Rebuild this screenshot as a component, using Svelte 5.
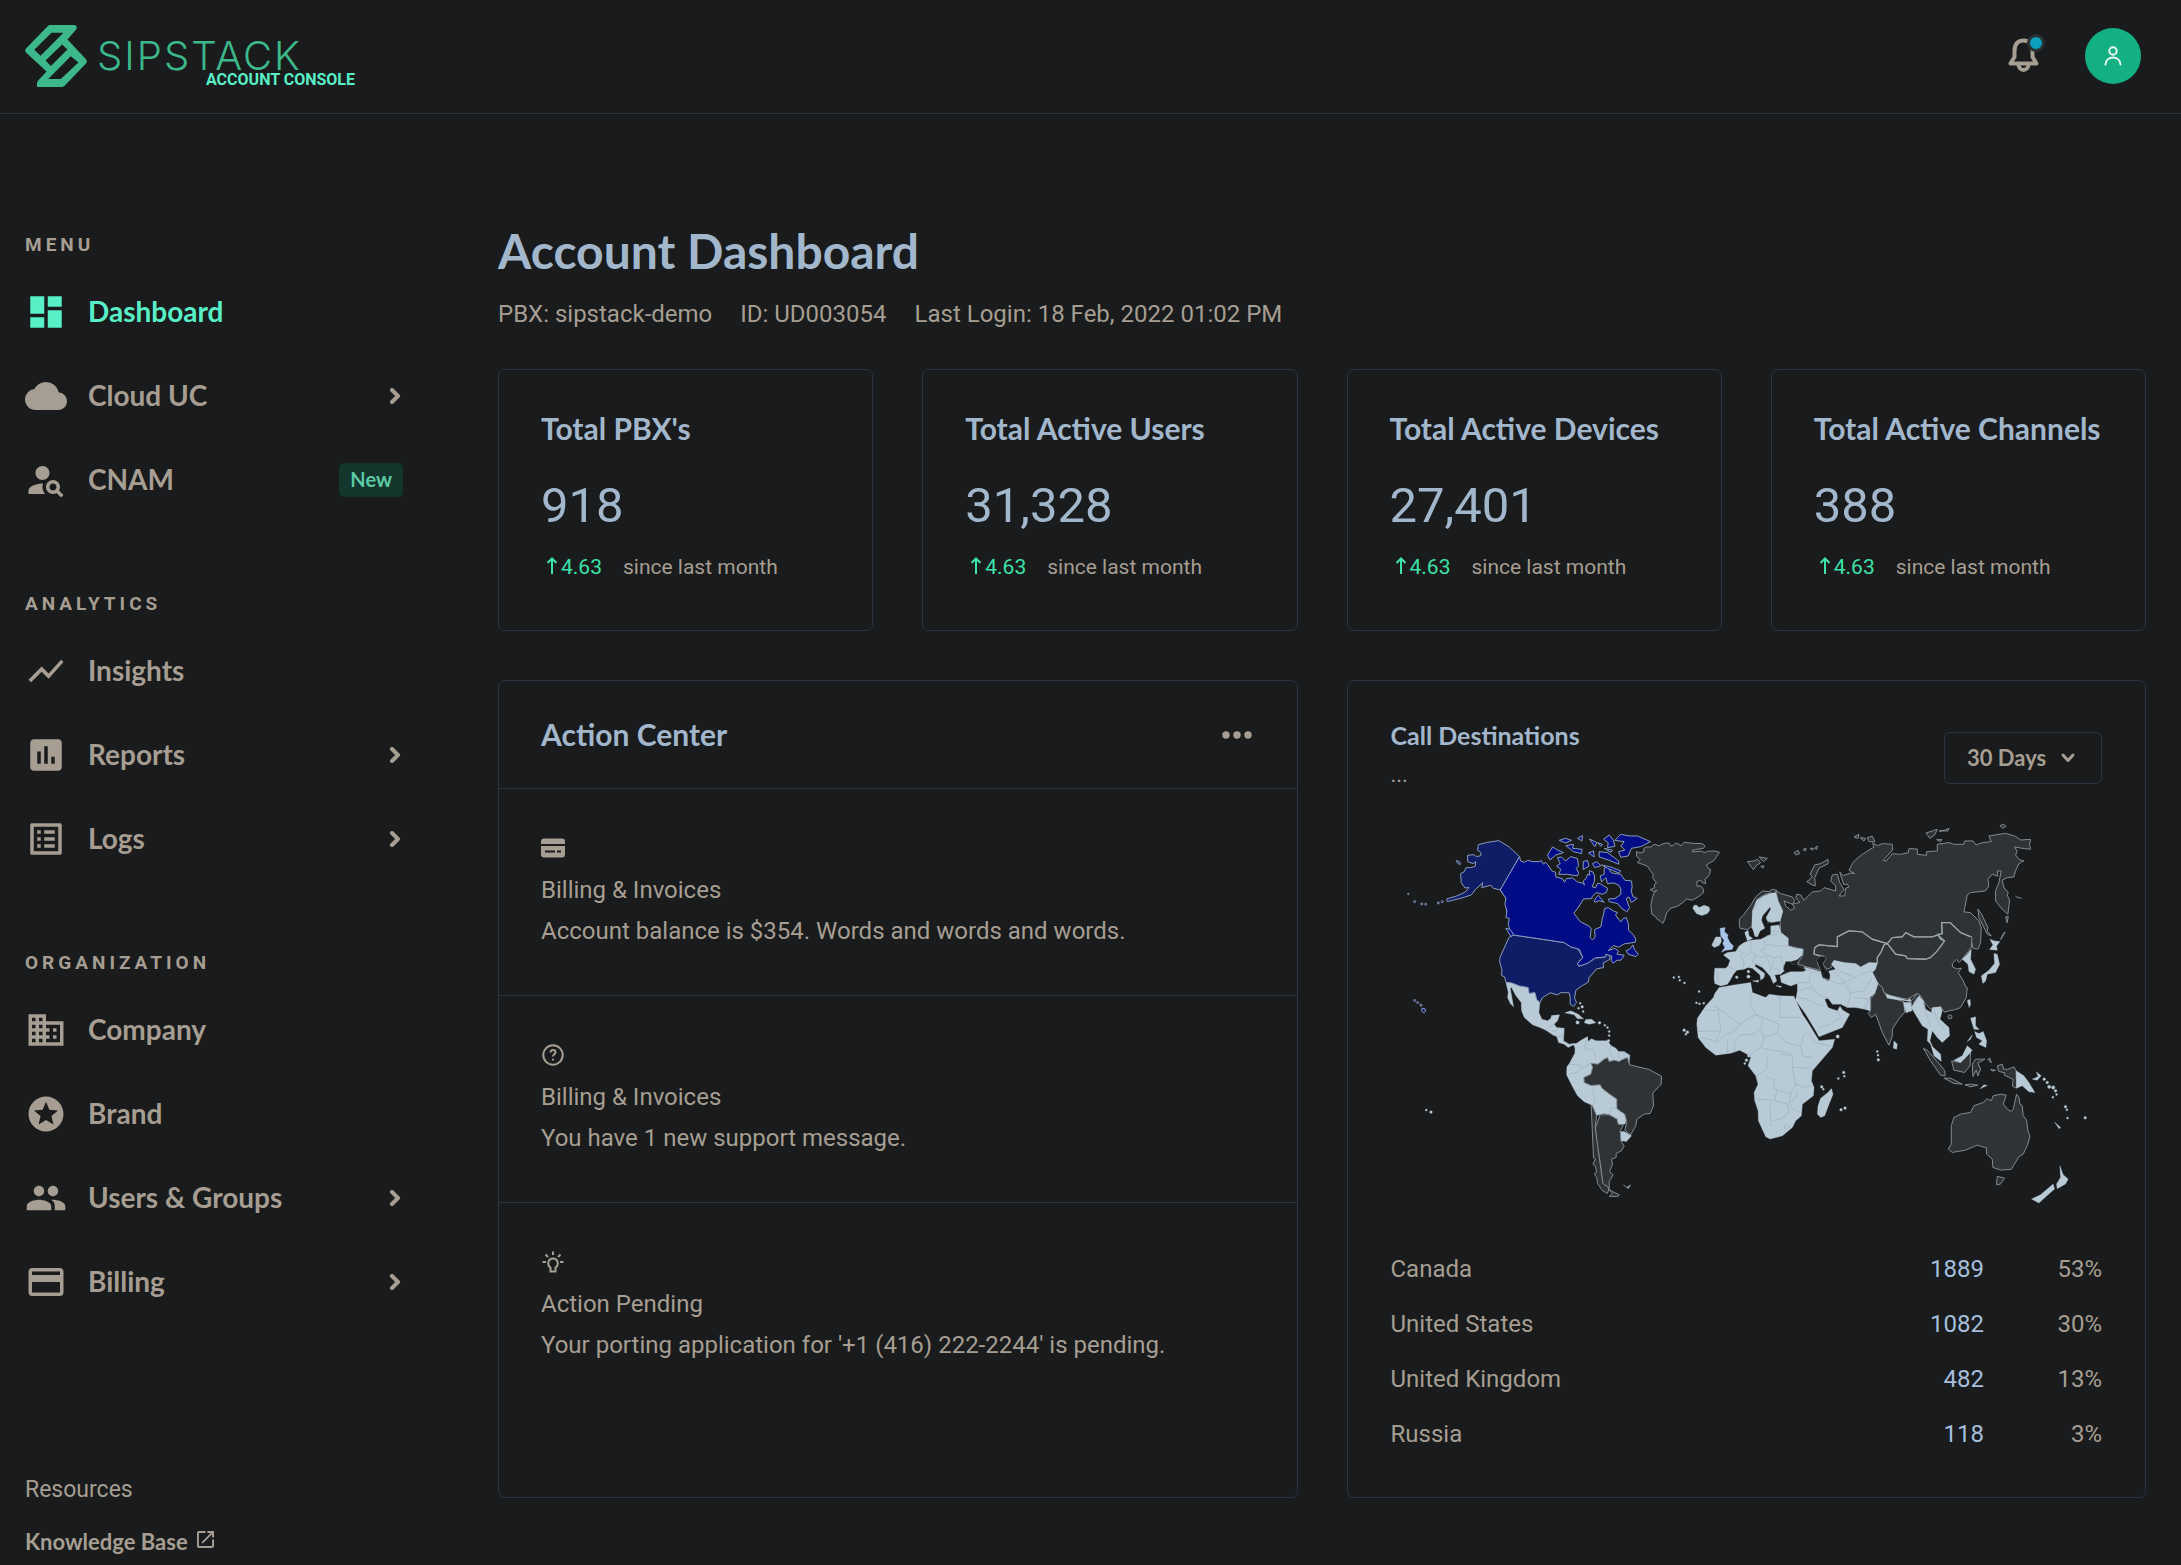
<script>
  const icons = {
    dashboard: 'M3 13h8V3H3v10zm0 8h8v-6H3v6zm10 0h8V11h-8v10zm0-18v6h8V3h-8z',
    cloud: 'M19.35 10.04A7.49 7.49 0 0 0 12 4C9.11 4 6.6 5.64 5.35 8.04A5.994 5.994 0 0 0 0 14c0 3.31 2.69 6 6 6h13c2.76 0 5-2.24 5-5 0-2.64-2.05-4.78-4.65-4.96z',
    personSearch: 'M10 12c2.21 0 4-1.79 4-4s-1.79-4-4-4-4 1.79-4 4 1.79 4 4 4zm.35 2.01C7.62 13.91 2 15.27 2 18v2h9.54c-2.47-2.76-1.23-5.89-1.19-5.99zM19.43 18.02c.36-.59.57-1.28.57-2.02 0-2.21-1.79-4-4-4s-4 1.79-4 4 1.79 4 4 4c.74 0 1.43-.22 2.02-.57L20.59 22 22 20.59l-2.57-2.57zM16 18c-1.1 0-2-.9-2-2s.9-2 2-2 2 .9 2 2-.9 2-2 2z',
    insights: 'M3.5 18.49l6-6.01 4 4L22 6.92l-1.41-1.41-7.09 7.97-4-4L2 16.99z',
    reports: 'M19 3H5c-1.1 0-2 .9-2 2v14c0 1.1.9 2 2 2h14c1.1 0 2-.9 2-2V5c0-1.1-.9-2-2-2zM9 17H7v-7h2v7zm4 0h-2V7h2v10zm4 0h-2v-4h2v4z',
    logs: 'M19 5v14H5V5h14m1.1-2H3.9c-.5 0-.9.4-.9.9v16.2c0 .4.4.9.9.9h16.2c.4 0 .9-.5.9-.9V3.9c0-.5-.5-.9-.9-.9zM11 7h6v2h-6V7zm0 4h6v2h-6v-2zm0 4h6v2h-6v-2zM7 7h2v2H7V7zm0 4h2v2H7v-2zm0 4h2v2H7v-2z',
    company: 'M12 7V3H2v18h20V7H12zM6 19H4v-2h2v2zm0-4H4v-2h2v2zm0-4H4V9h2v2zm0-4H4V5h2v2zm4 12H8v-2h2v2zm0-4H8v-2h2v2zm0-4H8V9h2v2zm0-4H8V5h2v2zm10 12h-8v-2h2v-2h-2v-2h2v-2h-2V9h8v10zm-2-8h-2v2h2v-2zm0 4h-2v2h2v-2z',
    brand: 'M11.99 2C6.47 2 2 6.48 2 12s4.47 10 9.99 10C17.52 22 22 17.52 22 12S17.52 2 11.99 2zm4.24 16L12 15.45 7.77 18l1.12-4.81-3.73-3.23 4.92-.42L12 5l1.92 4.53 4.92.42-3.73 3.23L16.23 18z',
    people: 'M16 11c1.66 0 2.99-1.34 2.99-3S17.66 5 16 5s-3 1.34-3 3 1.34 3 3 3zm-8 0c1.66 0 2.99-1.34 2.99-3S9.66 5 8 5 5 6.34 5 8s1.34 3 3 3zm0 2c-2.33 0-7 1.17-7 3.5V19h14v-2.5c0-2.33-4.67-3.5-7-3.5zm8 0c-.29 0-.62.02-.97.05 1.16.84 1.97 1.97 1.97 3.45V19h6v-2.5c0-2.33-4.67-3.5-7-3.5z',
    billing: 'M20 4H4c-1.11 0-1.99.89-1.99 2L2 18c0 1.11.89 2 2 2h16c1.11 0 2-.89 2-2V6c0-1.11-.89-2-2-2zm0 14H4v-6h16v6zm0-10H4V6h16v2z'
  };

  const sections = [
    { title: 'MENU', items: [
      { label: 'Dashboard', icon: 'dashboard', active: true },
      { label: 'Cloud UC', icon: 'cloud', more: true },
      { label: 'CNAM', icon: 'personSearch', badge: 'New' }
    ] },
    { title: 'ANALYTICS', items: [
      { label: 'Insights', icon: 'insights' },
      { label: 'Reports', icon: 'reports', more: true },
      { label: 'Logs', icon: 'logs', more: true }
    ] },
    { title: 'ORGANIZATION', items: [
      { label: 'Company', icon: 'company' },
      { label: 'Brand', icon: 'brand' },
      { label: 'Users & Groups', icon: 'people', more: true },
      { label: 'Billing', icon: 'billing', more: true }
    ] }
  ];

  const stats = [
    { title: "Total PBX's", value: '918' },
    { title: 'Total Active Users', value: '31,328' },
    { title: 'Total Active Devices', value: '27,401' },
    { title: 'Total Active Channels', value: '388' }
  ];

  const actions = [
    { icon: 'card', title: 'Billing & Invoices', text: 'Account balance is $354. Words and words and words.' },
    { icon: 'help', title: 'Billing & Invoices', text: 'You have 1 new support message.' },
    { icon: 'bulb', title: 'Action Pending', text: "Your porting application for '+1 (416) 222-2244' is pending." }
  ];

  const destinations = [
    ['Canada', '1889', '53%'],
    ['United States', '1082', '30%'],
    ['United Kingdom', '482', '13%'],
    ['Russia', '118', '3%']
  ];

  // Small islands: x, y, radius
  const westDots = [[52,249,2],[71,272,3],[92,279,3],[104,280,3],[142,276,3],[154,272,3],[71,569,3],[80,575,3],[90,583,3]];
  const lightDots = [[106,898,3],[120,904,4],[849,500,3],[864,498,3],[867,508,3],[881,516,3],[925,542,3],[917,576,3],[926,579,3],[939,577,3],[880,658,4],[890,664,4],[885,670,3],[568,577,3],[574,588,4],[563,592,3],[577,602,3],[560,635,5],[626,636,4],[642,643,3],[650,650,3],[655,662,3],[655,674,3],[653,690,4],[1074,735,4],[1067,748,4],[1062,758,3],[1038,499,4],[1073,482,4],[1073,497,5]];
  const eastDots = [[410,722,3],[412,733,3],[413,747,4],[309,785,4],[311,796,3],[293,803,3],[243,828,4],[248,835,3],[301,897,4],[313,892,4],[911,805,4],[920,815,4],[926,828,5],[938,830,5],[945,840,4],[948,851,3],[937,859,3],[975,888,4],[979,897,3],[981,922,3],[1034,921,4],[291,677,5]];

  let period = $state('30 Days');
</script>

<svelte:head><title>Account Dashboard</title></svelte:head>

<header>
  <a class="brand" href="#home" aria-label="Sipstack account console">
    <svg class="mark" viewBox="75 75 187 187" aria-hidden="true">
      <path fill-rule="evenodd" d="M150 75H222Q235 77 230 88L203 119L259 178Q264 185 259 191L196 257Q192 262 186 262H112Q109 250 114 243L140 215L78 158Q73 152 78 146L144 78Q147 75 150 75ZM155 98L103 150L122 168L191 98ZM187 134L137 182L153 199L203 149ZM213 169L145 238H183L236 188Z" />
    </svg>
    <span class="words"><span class="name">SIPSTACK</span><span class="console">ACCOUNT CONSOLE</span></span>
  </a>
  <div class="tools">
    <button class="bell" aria-label="Notifications">
      <svg viewBox="0 0 34 36" aria-hidden="true">
        <path d="M3.5 25.5H29.5L25.5 19V13C25.5 6 22 2.5 16.5 2.5S7.5 6 7.5 13V19Z M11.5 26C11.5 34 21.5 34 21.5 26" />
      </svg>
      <i></i>
    </button>
    <button class="avatar" aria-label="Account">
      <svg viewBox="0 0 18 20" aria-hidden="true"><circle cx="9" cy="5" r="3.7" /><path d="M1.5 18.5C2 9 16 9 16.5 18.5" /></svg>
    </button>
  </div>
</header>

<div class="layout">
  <aside>
    <nav>
      {#each sections as s}
        <section>
          <h2>{s.title}</h2>
          {#each s.items as item}
            <a class="item" class:active={item.active} href={'#' + item.icon}>
              <svg class="icon" viewBox="0 0 24 24" aria-hidden="true"><path d={icons[item.icon]} /></svg>
              <span>{item.label}</span>
              {#if item.more}
                <svg class="chev" viewBox="0 0 12 16" aria-hidden="true"><path d="M3 2L9 8L3 14" /></svg>
              {/if}
              {#if item.badge}<b>{item.badge}</b>{/if}
            </a>
          {/each}
        </section>
      {/each}
    </nav>
    <div class="resources">
      <p>Resources</p>
      <a href="#kb">Knowledge Base
        <svg viewBox="3 3 18 18" aria-hidden="true"><path d="M19 19H5V5h7V3H5a2 2 0 0 0-2 2v14a2 2 0 0 0 2 2h14c1.1 0 2-.9 2-2v-7h-2v7zM14 3v2h3.59l-9.83 9.83 1.41 1.41L19 6.41V10h2V3h-7z" /></svg>
      </a>
    </div>
  </aside>

  <main>
    <h1>Account Dashboard</h1>
    <p class="meta"><span>PBX: sipstack-demo</span><span>ID: UD003054</span><span>Last Login: 18 Feb, 2022 01:02 PM</span></p>

    <div class="grid">
      {#each stats as s}
        <article class="card stat">
          <h3>{s.title}</h3>
          <p class="value">{s.value}</p>
          <p class="trend">
            <svg viewBox="0 0 12 18" aria-hidden="true"><path d="M6 17V2M1.500 6L6 1.500L10.500 6" /></svg>
            <strong>4.63</strong><span>since last month</span>
          </p>
        </article>
      {/each}

      <section class="card wide">
        <div class="head">
          <h3>Action Center</h3>
          <button aria-label="More options"><svg viewBox="0 0 30 8" aria-hidden="true"><circle cx="4" cy="4" r="3.7" /><circle cx="15" cy="4" r="3.7" /><circle cx="26" cy="4" r="3.7" /></svg></button>
        </div>
        {#each actions as a}
          <div class="action">
            <div class="glyph">
              {#if a.icon === 'card'}
                <svg viewBox="0 0 24 24" aria-hidden="true"><path fill-rule="evenodd" d="M3 2.5H21Q24 2.5 24 5.5V8H0V5.5Q0 2.5 3 2.5ZM0 10H24V18.5Q24 21.5 21 21.5H3Q0 21.5 0 18.5ZM4 14.5V16.5H14V14.5ZM16 14.5V16.5H20V14.5Z" /></svg>
              {:else if a.icon === 'help'}
                <svg class="line" viewBox="0 0 24 24" aria-hidden="true"><circle cx="12" cy="12" r="9.7" /><path d="M9.5 9.5C9.5 6 14.5 6.3 14.5 9.3C14.5 11.5 12 11.2 12 13.6M12 15.8V17.4" /></svg>
              {:else}
                <svg class="line" viewBox="0 0 24 24" aria-hidden="true"><path d="M9.5 21.5V17.5C6 15.5 6.5 8.5 12 8.5S18 15.5 14.5 17.5V21.5ZM12 1.5V5M1.5 12H5M19 12H22.5M4.5 4.5L7 7M19.5 4.5L17 7" /></svg>
              {/if}
            </div>
            <p>{a.title}</p>
            <p>{a.text}</p>
          </div>
        {/each}
      </section>

      <section class="card wide calls">
        <div class="callhead">
          <div><h4>Call Destinations</h4><p>...</p></div>
          <label class="period">
            <select aria-label="Period" bind:value={period}>
              <option>30 Days</option><option>60 Days</option><option>90 Days</option>
            </select>
            <svg viewBox="0 0 14 10" aria-hidden="true"><path d="M2 2L7 7.5L12 2" /></svg>
          </label>
        </div>

        <svg class="map" viewBox="0 0 2136 1200" role="img" aria-label="Call destinations by country">
          <g class="grey">
            <path d="M737 122L747 126L760 122L758 114L766 108L780 108L790 100L805 104L820 97L835 96L840 105L848 102L855 96L872 104L880 94L905 97L935 98L943 105L938 112L918 115L905 118L905 123L930 120L942 125L950 121L972 120L986 124L978 136L970 148L947 162L952 172L959 175L957 188L950 200L942 205L945 218L935 216L930 208L918 212L919 226L930 225L938 235L938 245L925 256L905 268L888 264L876 275L860 286L840 292L828 305L822 325L816 338L806 328L800 326L793 316L783 310L780 285L784 262L790 245L799 238L788 242L778 236L792 230L790 222L797 216L785 200L788 192L778 178L770 166L755 160L740 155L748 145L737 136Z" />
          </g>
          <g class="light">
            <path d="M345 514L360 512L385 525L412 530L415 548L432 545L437 565L447 575L444 605L453 625L470 630L480 622L482 614L506 612L500 630L490 640L497 650L520 652L518 690L535 700L552 697L560 702L553 712L548 702L532 710L520 700L503 695L498 678L485 672L465 658L447 650L425 642L400 620L392 600L391 575L374 553L362 530L358 532L368 588L358 578L350 560L352 545Z" />
            <path d="M522 606L540 600L562 610L578 624L560 624L550 612Z M580 636L585 626L602 625L615 636L595 640Z" />
            <path d="M553 700L568 690L590 677L592 692L602 684L615 690L650 690L660 704L675 712L683 722L700 722L717 733L715 760L690 820L700 910L706 925L703 940L680 940L680 925L655 912L640 908L625 912L617 914L605 884L580 873L560 855L545 828L527 792L528 768L536 757L545 740L552 727Z M688 962L700 962L722 975L707 992L690 990Z" />
            <path d="M906 292L910 283L918 283L925 290L940 283L955 288L957 298L950 308L933 314L917 308Z M963 402L975 378L990 378L992 392L985 404L970 410Z M698 1122L708 1130L720 1122L712 1133Z" />
            {#each lightDots as d}<circle cx={d[0]} cy={d[1]} r={d[2]} />{/each}
          </g>
          <g class="grey">
            <path d="M601 757L605 770L600 790L579 800L580 815L600 824L628 822L633 832L656 850L678 865L678 893L690 903L702 910L708 935L702 958L720 972L735 945L738 926L760 910L778 908L788 885L786 847L811 820L812 796L775 776L716 762L710 740L690 748L685 752L670 748L655 752L650 740L640 745L621 760Z" />
            <path d="M628 912L655 912L678 925L682 940L698 942L688 960L690 990L700 1006L692 1020L676 1028L676 1040L662 1045L665 1060L656 1083L667 1092L655 1112L655 1131L636 1120L630 1070L617 990L614 950Z" />
            <path d="M601 884L606 888L617 915L613 950L621 1010L628 1060L636 1118L655 1132L650 1148L635 1140L620 1118L618 1100L610 1090L617 1085L614 1066L606 1060L614 1045L608 1042Z M652 1134L668 1144L685 1152L682 1157L655 1157L665 1148Z" />
          </g>
          <g class="us">
            <path d="M386 137L355 108L324 89L290 94L262 101L260 118L270 125L270 134L257 137L247 131L230 133L230 152L247 158L254 152L253 166L240 170L225 170L220 182L209 188L211 215L222 231L234 230L222 244L195 256L167 264L169 272L210 262L241 252L254 235L276 215L272 230L300 223L307 232L328 237L349 256L357 285L355 302L347 303L345 262L328 237Z" />
            <path d="M366 372L520 395L540 408L560 413L576 439L570 445L560 458L564 466L590 457L614 441L640 440L645 432L655 430L658 445L637 456L638 470L617 474L595 500L592 514L575 524L555 538L551 562L557 575L548 587L538 580L538 560L535 546L510 545L500 552L478 546L455 560L447 575L437 565L432 545L415 548L412 530L385 525L362 516L345 514L341 498L332 494L333 476L326 452L327 440L354 380Z M93 592L102 594L104 601L97 606L92 600Z M196 148L208 154L207 161L200 157Z" />
            {#each westDots as d}<circle cx={d[0]} cy={d[1]} r={d[2]} />{/each}
          </g>
          <g class="canada">
            <path d="M386 137L389 150L400 154L411 148L424 152L444 152L452 149L458 160L463 154L470 160L483 180L494 184L495 198L515 203L521 214L527 203L545 201L560 213L574 216L581 222L577 210L586 202L590 190L597 193L595 179L606 183L611 195L611 210L604 228L614 230L620 217L628 218L640 226L650 232L647 244L634 250L616 245L604 257L603 263L578 264L562 290L549 307L568 332L595 346L601 352L598 380L605 387L613 378L611 356L630 348L634 325L638 310L641 293L652 290L668 300L680 305L674 312L690 333L697 323L706 320L713 340L713 358L727 371L735 385L733 394L700 399L683 409L668 404L652 419L672 412L683 421L678 430L700 433L690 448L678 448L667 457L661 449L663 436L645 430L645 438L614 441L590 457L564 466L560 458L576 439L565 415L540 408L520 395L366 372L356 355L352 340L355 322L345 320L348 300L342 280L345 262L328 237L355 190Z" />
            <path d="M706 419L718 414L726 402L731 416L742 430L735 437L712 430Z M628 195L640 190L640 172L650 168L662 186L690 190L702 208L722 210L724 228L721 240L727 258L739 262L722 275L714 258L706 263L716 290L708 303L690 290L681 278L655 272L653 264L672 263L690 250L690 234L683 222L668 216L650 218L645 200L632 213Z M610 268L622 253L640 274L625 269L612 274Z M345 352L358 356L368 370L360 377Z" />
            <path d="M500 140L512 138L523 150L540 137L560 143L563 165L556 172L563 185L560 195L530 190L503 190L510 175L497 165L508 158Z M470 132L485 108L498 116L518 125L495 132L477 147Z M505 88L524 82L542 88L525 96Z M525 104L548 100L545 112L574 115L572 128L548 122Z M560 82L575 74L573 90Z M596 84L618 95L612 107Z M638 85L655 72L668 88L672 106L650 110L652 95Z M672 88L690 70L715 75L740 75L779 92L750 107L722 112L712 135L690 139L683 122L702 117L690 105L700 92Z M625 122L650 125L683 150L684 160L655 148L625 138Z M593 126L608 120L610 138Z M577 152L590 148L594 165L577 176Z M605 158L618 152L630 164L612 170Z M632 162L660 168L690 180L684 186L650 172Z M620 95L635 100L630 106Z M640 112L665 118L660 124Z" />
          </g>
          <path class="uk" d="M988 352L1003 350L1001 362L1012 372L1010 380L1018 395L1028 405L1024 416L1005 418L992 424L1002 410L996 398L1000 388L990 375Z" />
          <g transform="translate(1050 0)">
            <g class="grey">
              <path d="M-4 325L10 310L32 280L45 258L65 240L85 242L95 235L108 238L110 250L90 246L70 252L50 265L38 295L35 345L20 356L-2 352L-4 340Z" />
              <path d="M105 240L120 248L155 258L162 270L155 280L130 270L135 285L150 298L162 292L155 280L178 274L165 262L168 250L180 252L190 268L215 243L240 240L250 230L285 240L285 225L270 210L275 192L290 190L297 215L310 235L295 255L312 255L315 232L325 228L320 220L309 220L297 183L308 194L330 186L342 188L325 178L335 158L345 146L365 130L400 108L396 96L410 104L425 98L455 100L455 118L428 148L437 150L455 128L480 130L503 125L505 113L530 114L530 130L558 133L558 122L590 120L590 100L625 95L640 100L670 100L672 90L698 90L706 102L725 95L752 92L745 75L795 67L825 76L840 87L870 85L867 100L870 115L845 112L822 108L830 120L825 132L836 146L850 150L835 158L825 180L820 198L800 200L785 208L790 230L803 245L800 252L807 268L802 310L785 295L765 270L765 240L775 215L782 180L770 180L772 196L755 190L742 205L745 225L735 240L690 245L680 252L670 303L690 305L715 330L722 350L720 395L712 415L697 412L690 378L660 365L628 335L603 335L605 368L590 370L575 380L520 378L495 365L485 378L455 380L440 398L395 385L365 363L325 360L290 378L290 407L235 402L222 410L220 430L250 436L255 445L240 445L230 455L240 478L205 470L172 460L175 450L187 432L187 415L142 405L142 382L120 365L118 330L126 300L112 270Z" />
              <path d="M220 430L222 410L235 402L290 407L290 378L325 360L365 363L395 385L440 398L430 402L422 422L410 440L410 458L385 457L360 470L345 462L310 458L280 450L272 470L258 475L246 460L255 445L250 436Z" />
              <path d="M440 398L455 380L485 378L495 365L520 378L575 378L592 372L612 390L590 420L570 440L555 445L500 443L495 435L465 430Z" />
              <path d="M440 398L430 402L422 422L410 440L410 456L395 484L412 518L425 530L430 545L450 555L500 565L530 548L540 555L555 580L570 595L600 588L612 604L625 600L645 596L660 590L677 560L680 530L675 528L668 510L653 485L662 472L648 474L636 468L635 458L648 445L655 455L665 445L692 410L694 378L660 365L628 335L603 335L605 368L592 372L600 385L612 390L590 420L570 440L555 445L500 443L495 435L465 430Z" />
              <path d="M412 518L425 530L430 545L440 557L490 573L492 605L476 622L455 655L455 675L445 703L425 665L405 610L392 620L383 608L390 598L390 565L402 548Z M510 572L530 548L540 555L525 565L515 590Z" />
              <path d="M262 145L240 158L222 162L208 190L215 196L208 205L198 212L215 222L224 225L222 200L235 172L262 158Z M20 152L40 150L50 145L60 155L48 162L38 176Z M55 138L80 142L68 152Z M60 166L70 165L66 172Z M160 125L172 118L177 128L165 132Z M188 114L196 112L196 118L190 119Z M208 112L218 112L216 118Z M222 112L230 105L228 115Z M340 78L355 70L352 82Z M358 80L375 82L370 90Z M380 80L395 76L403 92L385 92Z M556 66L575 60L590 55L582 72L568 82Z M595 60L612 58L625 52L622 60Z M588 86L604 86L600 92Z M778 44L790 40L796 46L786 52Z M712 295L722 308L735 335L742 350L740 360L752 375L740 370L728 345L715 320Z M795 318L803 316L800 336Z M788 368L794 364L780 386Z M825 256L833 260L843 262" />
              <path d="M548 712L562 720L588 750L613 780L613 795L600 793L570 750Z M610 802L630 802L665 820L640 818Z M633 750L660 755L690 725L688 765L672 785L640 778Z M695 760L705 745L733 745L712 757L720 775L712 795L707 778L697 797Z M770 765L785 760L789 775L800 776L820 768L827 780L828 832L815 826L818 806L790 792L793 786L775 782Z M742 745L748 742L752 756Z M750 776L765 778L756 781Z M673 822L690 820L712 823L690 828Z" />
              <path d="M632 945L640 920L660 910L690 905L700 885L730 874L738 864L752 870L758 855L780 850L797 853L788 880L800 895L812 902L818 895L828 850L835 860L838 880L845 885L848 915L858 928L862 960L868 975L862 1000L848 1030L835 1038L824 1056L812 1076L780 1078L757 1070L755 1045L738 1030L738 1012L710 1003L675 1018L635 1025L623 1015L632 1000Z M770 1097L792 1102L780 1120L768 1122Z" />
              <circle cx="628" cy="618" r="6" />
            </g>
            <g class="light">
              <path d="M35 300L48 268L68 255L88 248L105 245L112 270L126 300L118 330L92 335L80 330L76 320L90 295L88 288L65 315L62 328L72 352L58 360L50 378L42 376L38 360L33 350Z M12 365L22 358L25 375L36 382L20 390Z" />
              <path d="M10 395L30 388L60 385L90 370L90 345L115 342L120 365L142 382L142 405L165 412L187 415L185 432L170 446L150 452L138 455L128 465L130 480L120 490L102 492L108 510L98 518L88 495L65 470L45 460L42 466L72 488L70 500L60 508L58 492L35 472L22 470L10 475L-12 478L-22 490L-30 505L-40 520L-60 525L-78 518L-80 500L-78 472L-45 472L-38 465L-32 448L-52 432L-40 425L-15 422L-5 405Z" />
              <path d="M118 495L150 482L195 480L190 468L240 482L245 500L262 510L268 500L265 480L285 475L272 460L280 448L310 455L345 458L360 468L385 455L410 456L405 475L395 484L412 518L402 548L388 560L388 600L372 595L345 590L320 590L300 580L275 580L262 562L252 565L262 590L275 595L290 600L298 586L306 598L327 610L305 650L235 678L225 660L195 610L165 568L170 540L170 518L150 525L122 515Z" />
              <path d="M-65 530L-20 522L30 515L35 545L75 560L85 550L120 555L160 556L165 568L185 610L205 640L235 690L282 685L275 710L215 780L212 810L220 830L218 855L185 880L182 915L165 930L155 950L125 975L88 985L75 978L53 930L52 900L42 870L40 845L52 820L45 795L22 765L30 740L22 732L-3 718L-30 727L-75 733L-105 710L-128 680L-132 640L-130 622L-105 585L-82 560L-78 548Z" />
              <path d="M232 885L240 862L262 845L272 833L277 850L265 880L252 915L240 920L230 910Z M435 550L500 568L510 563L510 572L440 562Z M488 575L510 574L514 600L496 606Z M512 590L535 555L548 570L555 595L572 605L575 590L600 588L605 600L598 625L625 650L627 675L605 695L590 680L575 660L568 690L576 708L600 730L602 752L580 735L570 700L560 690L562 655L545 645L530 620Z M460 690L470 700L468 715L458 712Z" />
              <path d="M640 748L665 735L680 705L695 718L680 735L660 755Z M690 622L705 618L705 645L716 656L700 655Z M702 662L715 668L728 662L738 690L736 710L715 700L725 690L708 680Z M680 692L695 672L690 685Z M827 780L850 795L865 815L883 845L865 843L845 825L828 832Z M875 805L893 797L887 783L902 795L890 808Z M718 834L730 822L740 824Z" />
              <path d="M748 385L762 390L778 392L768 405L770 418L747 416L757 402Z M760 428L770 430L777 460L765 485L740 490L735 510L727 518L722 495L745 478L762 458Z M665 445L680 430L692 415L690 445L705 475L700 490L685 482L682 460Z M680 570L688 565L690 580L686 590Z" />
              <path d="M958 1065L968 1092L983 1105L975 1120L950 1134L948 1120L960 1100Z M938 1120L942 1135L925 1150L895 1177L873 1165L900 1152Z M942 934L960 950L956 954Z M35 510L55 508L52 514Z M105 524L122 526L120 530Z" />
              {#each eastDots as d}<circle cx={d[0]} cy={d[1]} r={d[2]} />{/each}
            </g>
            <path class="sea" d="M128 474L135 452L150 452L156 462L172 452L168 462L195 476L188 482L150 482L134 486Z M228 448L240 436L255 438L255 446L246 458L252 472L268 490L266 508L247 502L243 486Z" />
            <path class="strong" d="M440 398L455 380L485 378L495 365L520 378L575 378L592 372L612 390L590 420L570 440L555 445L500 443L495 435L465 430ZM612 390L600 385L592 372L605 368L603 335L628 335L660 365L690 378M410 456L410 440L422 422L430 402L440 398L395 385L365 363L325 360L290 378L290 407L235 402L222 410L220 430L240 436" />
            <path class="inner" d="M-78 585L-2 640L45 610L115 640M30 545L30 580L45 610M118 555V620H182M-105 598L-68 598L-60 660L-130 662M-78 585L-60 598M-2 640L-20 662L-45 670L-78 700M-60 660L-75 690L-120 680M45 610L65 625L60 655L40 670L0 672L-18 690V725M-40 690V727M60 655L70 680L110 665L115 640M70 680L60 710L25 735M60 710L80 715L110 720L150 728L160 740M110 665L130 690L150 700L180 705L190 670L200 665L225 695L270 705M180 705L185 735L215 740M155 735L155 770L165 820L190 830L215 825M80 735L78 775L45 798M78 800L100 805L100 835L150 850L165 820M40 865L102 868L110 835M88 870L90 945M100 870L140 880L145 905L120 925L95 930M140 880L165 860L170 835M150 850L145 880L165 900L180 905M130 945Q140 935 145 945T132 952ZM155 770L212 772M120 730L155 735" />
            <path class="inner" d="M170 515L205 515L210 485M175 540L205 530L240 555L262 562M172 560L200 565L225 580L250 585M235 650L270 640L300 620L290 600M205 515L225 540L240 555M245 500L300 520L345 500M320 590L330 545L300 500L275 480M330 545L370 540L395 500M285 475L345 500L360 490L395 480M372 595L385 565L340 560M190 470L215 485L240 482" />
            <path class="inner" d="M70 388L72 415L60 420L75 432L100 440L120 435L128 460M142 405L105 405L75 400M78 375L110 370M100 440L95 470L120 478M30 390L30 420L45 435L72 440M10 440L30 425M0 430L10 455L8 475M-12 478L-38 468M45 435L35 455L60 462M75 432L90 465L88 485M-70 480L-68 518M-10 418L12 428M548 575L560 620L570 645M580 600L595 635L610 655M560 620L575 605M35 300L60 262M80 335L92 330M92 360L115 362" />
          </g>
          <path class="inner" d="M585 690L582 712L608 718L615 745M660 704L655 725L665 740M683 722L685 745M700 722L700 742M600 757L578 770L560 762L536 760M578 770L560 785L535 790M605 826L612 870L605 884M655 912L660 892L678 890M470 652L490 640M480 665L500 655M500 678L520 672" />
        </svg>

        <table>
          <tbody>
            {#each destinations as [country, count, share]}
              <tr><th scope="row">{country}</th><td class="count">{count}</td><td class="share">{share}</td></tr>
            {/each}
          </tbody>
        </table>
      </section>
    </div>
  </main>
</div>

<style>
  :global(body) {
    margin: 0;
    background: #191b1c;
    color: #a69e92;
    font: 24px/32px Roboto, sans-serif;
    font-variant-ligatures: none;
  }
  h1, h2, h3, h4, p { margin: 0; }
  a { color: inherit; text-decoration: none; }
  button { padding: 0; border: 0; background: none; color: inherit; cursor: pointer; }
  svg { display: block; flex: none; fill: currentColor; }

  header {
    display: flex;
    align-items: center;
    justify-content: space-between;
    height: 111px;
    padding: 0 40px 2px 25px;
    border-bottom: 1px solid #29333f;
  }
  .brand { display: flex; gap: 10px; align-items: center; }
  .mark { width: 62px; height: 62px; color: #3cb88b; }
  .words { display: flex; flex-direction: column; padding-top: 18px; }
  .name { color: #3cb88b; font: 300 40px/30px Inter, sans-serif; letter-spacing: 2px; }
  .console { margin-left: 109px; color: #58f0c6; font: 700 16px/18px Roboto, sans-serif; }
  .tools { display: flex; align-items: center; gap: 44px; }
  .bell { position: relative; }
  .bell svg { width: 34px; height: 36px; fill: none; stroke: currentColor; stroke-width: 4; stroke-linejoin: round; }
  .bell i { position: absolute; right: -4px; top: -4px; width: 12px; height: 12px; border: 3px solid #2c3032; border-radius: 50%; background: #08a0bd; }
  .avatar { display: grid; place-items: center; width: 56px; height: 56px; border-radius: 50%; background: #12b083; color: #eafaf4; }
  .avatar svg { width: 18px; height: 20px; fill: none; stroke: currentColor; stroke-width: 2; stroke-linecap: round; }

  .layout { display: grid; grid-template-columns: 378px minmax(0, 1fr); gap: 95px; padding: 0 35px 0 25px; }
  aside { padding-top: 119px; }
  section + section { margin-top: 70px; }
  .grid section { margin-top: 0; }
  h2 { margin-bottom: 13px; font: 700 19px/24px Roboto, sans-serif; letter-spacing: 4px; }
  .item { display: flex; align-items: center; gap: 21px; height: 84px; font: 700 28px/36px Lato, sans-serif; }
  .item span { flex: 1; padding-bottom: 2px; }
  .active { color: #58f0c6; }
  .icon { width: 42px; height: 42px; }
  .chev { width: 12px; height: 16px; margin-right: 2px; fill: none; stroke: currentColor; stroke-width: 4; stroke-linecap: round; stroke-linejoin: round; }
  .item b { padding: 3px 11px 5px; border-radius: 5px; background: #13352c; color: #5cc9a6; font: 700 20px/26px Lato, sans-serif; }
  .resources { margin-top: 151px; }
  .resources p { font-size: 23px; line-height: 30px; }
  .resources a { display: flex; gap: 9px; margin-top: 22px; font: 700 22px/30px Lato, sans-serif; }
  .resources svg { width: 17px; height: 17px; margin-top: 4px; }

  main { padding-top: 108px; }
  h1 { color: #a2b7cc; font: 700 48px/58px Lato, sans-serif; }
  .meta { display: flex; gap: 28px; margin: 18px 0 39px; }
  .grid { display: grid; grid-template-columns: repeat(4, minmax(0, 1fr)); gap: 49px; }
  .card { border: 1px solid #2c3344; border-radius: 7px; }
  .wide { grid-column: span 2; }
  h3 { color: #a2b7cc; font: 700 30px/40px Lato, sans-serif; white-space: nowrap; }
  .stat { padding: 38px 42px 48px; }
  .value { margin-top: 28px; color: #a2b7cc; font-size: 49px; line-height: 60px; }
  .trend { display: flex; align-items: center; margin-top: 16px; padding-left: 5px; font-size: 21px; line-height: 30px; }
  .trend svg { width: 12px; height: 18px; margin: 0 3px 2px 0; fill: none; stroke: #3de3a8; stroke-width: 2; }
  .trend strong { margin-right: 21px; color: #3de3a8; font-weight: 400; }

  .head { display: flex; align-items: center; justify-content: space-between; height: 107px; padding: 0 45px 0 42px; }
  .head h3 { padding-bottom: 2px; }
  .head svg { width: 30px; height: 8px; }
  .action { padding: 40px 42px 43px; border-top: 1px solid #2c3344; line-height: 41px; }
  .glyph { display: flex; align-items: center; height: 38px; padding-bottom: 3px; }
  .glyph svg { width: 24px; height: 24px; }
  .glyph .line { fill: none; stroke: currentColor; stroke-width: 2; }

  .calls { padding: 38px 43px 35px; }
  .callhead { display: flex; justify-content: space-between; align-items: flex-start; height: 92px; }
  h4 { color: #a2b7cc; font: 700 25px/32px Lato, sans-serif; }
  .callhead p { font-size: 22px; line-height: 40px; margin-top: 4px; }
  .period { position: relative; margin-top: 13px; }
  .period select { appearance: none; height: 52px; padding: 0 54px 0 22px; border: 1px solid #2c3344; border-radius: 6px; background: transparent; color: inherit; font: 700 22px/30px Lato, sans-serif; }
  .period svg { position: absolute; right: 27px; top: 21px; width: 14px; height: 10px; fill: none; stroke: currentColor; stroke-width: 3; stroke-linecap: round; stroke-linejoin: round; pointer-events: none; }
  .map { width: 100%; height: auto; }
  .map path, .map circle { stroke-width: 3; stroke-linejoin: round; }
  .map .grey * { fill: #2f3335; stroke: #828b91; }
  .map .light * { fill: #b9cad7; stroke: #b9cad7; stroke-width: 1; }
  .map .us * { fill: #0f1c66; stroke: #8a9dbb; }
  .map .canada * { fill: #000c86; stroke: #8a9dbb; }
  .map .uk { fill: #a9c4ea; stroke: #a9c4ea; stroke-width: 1; }
  .map .sea { fill: #191b1c; stroke: #828b91; stroke-width: 1; }
  .map .strong { fill: none; stroke: #98a3aa; stroke-width: 4; }
  .map .inner { fill: none; stroke: #9dafbc; stroke-width: 2; }

  table { width: 100%; margin-top: 31px; border-collapse: collapse; }
  tr { height: 55px; }
  th, td { padding: 0; font-weight: 400; text-align: left; }
  .count { color: #a6bfdd; text-align: right; }
  .share { width: 118px; text-align: right; }
</style>
